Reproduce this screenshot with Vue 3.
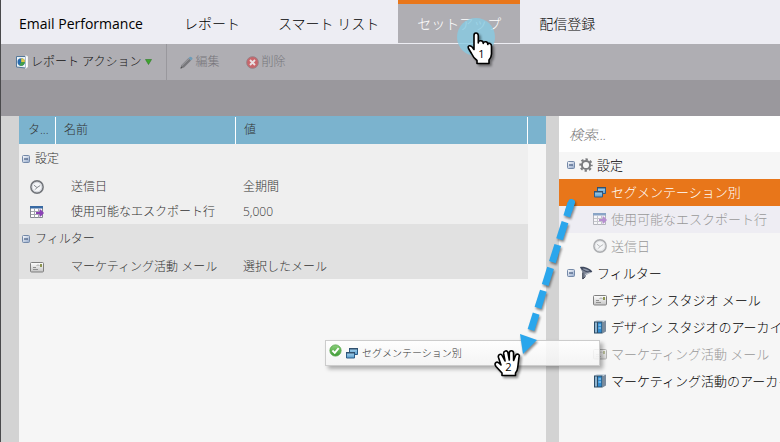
<script setup>
import { ref } from 'vue'

const tabs = ['レポート', 'スマート リスト', 'セットアップ', '配信登録']
const activeTab = ref('セットアップ')
const query = ref('')

const groups = [
  {
    title: '設定',
    shade: 'light',
    rows: [
      { icon: 'clock', name: '送信日', value: '全期間' },
      { icon: 'export', name: '使用可能なエスクポート行', value: '5,000' },
    ],
  },
  {
    title: 'フィルター',
    shade: 'dark',
    rows: [{ icon: 'mail', name: 'マーケティング活動 メール', value: '選択したメール' }],
  },
]

const tree = [
  {
    title: '設定',
    icon: 'gear',
    items: [
      { icon: 'segment', label: 'セグメンテーション別', state: 'selected' },
      { icon: 'export', label: '使用可能なエスクポート行', state: 'used striped' },
      { icon: 'clock', label: '送信日', state: 'used' },
    ],
  },
  {
    title: 'フィルター',
    icon: 'funnel',
    items: [
      { icon: 'mail', label: 'デザイン スタジオ メール', state: '' },
      { icon: 'archive', label: 'デザイン スタジオのアーカイブ', state: '' },
      { icon: 'mail', label: 'マーケティング活動 メール', state: 'used' },
      { icon: 'archive', label: 'マーケティング活動のアーカイブ', state: '' },
    ],
  },
]
</script>

<template>
  <div class="app">
    <svg class="sprite" aria-hidden="true">
      <defs>
        <linearGradient id="g-box" x1="0" y1="0" x2="1" y2="1">
          <stop offset="0" stop-color="#ffffff" /><stop offset="1" stop-color="#8fa5c8" />
        </linearGradient>
        <linearGradient id="g-mail" x1="0" y1="0" x2="0" y2="1">
          <stop offset="0" stop-color="#ffffff" /><stop offset="1" stop-color="#c4c4c4" />
        </linearGradient>
        <linearGradient id="g-blue" x1="0" y1="0" x2="0" y2="1">
          <stop offset="0" stop-color="#a9d6f0" /><stop offset="1" stop-color="#5a9ccb" />
        </linearGradient>
        <linearGradient id="g-green" x1="0" y1="0" x2="0" y2="1">
          <stop offset="0" stop-color="#8bd07a" /><stop offset="1" stop-color="#3d9a35" />
        </linearGradient>
        <symbol id="i-minus" viewBox="0 0 8 8">
          <rect x=".5" y=".5" width="7" height="7" rx="1" fill="url(#g-box)" stroke="#7489a8" />
          <path d="M2 4h4" stroke="#27406b" />
        </symbol>
        <symbol id="i-clock" viewBox="0 0 14 14">
          <circle cx="7" cy="7" r="6.100" fill="#f4f5f7" stroke="#73767b" stroke-width="1.600" />
          <circle cx="7" cy="7" r="4.800" fill="none" stroke="#c9cdd3" stroke-width=".8" />
          <path d="M4 5.200 7 7.600 10.200 5.500M7 7.600 5.200 9.600" fill="none" stroke="#7b7f85" stroke-width=".9" />
        </symbol>
        <symbol id="i-export" viewBox="0 0 14 14">
          <path d="M.5 1.500h12v11H.5z" fill="#fff" stroke="#858990" />
          <path d="M0 1h13v2.500H0z" fill="#3769a3" />
          <path d="M4.500 3.500v9M8.500 3.500v9M1 6.500h11M1 9.500h11" stroke="#a3a7ad" />
          <path d="M6 7h3.500V4.500h1.200L14 8l-3.300 3.500H9.500V9H6z" fill="#8b43b5" />
        </symbol>
        <symbol id="i-mail" viewBox="0 0 14 14">
          <rect x=".5" y="2.500" width="13" height="9.500" rx="1" fill="url(#g-mail)" stroke="#808080" />
          <path d="M3 7.500h3M3 9.500h5" stroke="#8f8f8f" />
          <rect x="10" y="4" width="2" height="3" fill="#8c9450" />
          <path d="M6.500 5.500q1.500-1 3 0" fill="none" stroke="#999" stroke-width=".8" />
        </symbol>
        <symbol id="i-gear" viewBox="0 0 14 14">
          <circle cx="7" cy="7" r="5.700" fill="none" stroke="#7a7b7e" stroke-width="2" stroke-dasharray="2.400 2.077" stroke-dashoffset="1.200" />
          <circle cx="7" cy="7" r="4.100" fill="none" stroke="#7a7b7e" stroke-width="2" />
        </symbol>
        <symbol id="i-segment" viewBox="0 0 14 14">
          <path d="M4.500 2.500h8v6h-8z" fill="url(#g-blue)" stroke="#2c5c88" />
          <path d="M4 2h9v1.500H4z" fill="#31516f" />
          <path d="M1.500 6.500h8v5.500h-8z" fill="url(#g-blue)" stroke="#2c5c88" />
          <path d="M1 6h9v1.500H1z" fill="#31516f" />
        </symbol>
        <symbol id="i-funnel" viewBox="0 0 14 14">
          <path d="M1 1 3.500 6.500V13.500L6.500 11 7 9 13 6z" fill="#7d8595" />
          <path d="M1 1C5-.3 12.500 3 13.300 5.800 9 7.500 3 5 1 1z" fill="#3f495e" />
          <path d="M3.500 2.500C6 2 10 4 11 5.300 8 5.500 4.500 4.500 3.500 2.500z" fill="#8d96a8" />
          <path d="M3.800 6.500V13L6 10.800" fill="none" stroke="#343b4b" />
          <path d="M6 8.500 11.500 6.500" stroke="#d4d8e0" stroke-width=".8" />
        </symbol>
        <symbol id="i-archive" viewBox="0 0 14 14">
          <path d="M9.500 2 13 .5v11L9.500 13.500z" fill="#7a8b9d" />
          <path d="M1 1.500 4 .3h9L9.500 2z" fill="#c3d0dc" />
          <path d="M1 1.500h8.500v12H1z" fill="#2c4c66" />
          <path d="M2 2.500h2v10H2z" fill="#8fb4d0" />
          <path d="M5 2.500h3.500v10H5z" fill="#2f8bd0" />
          <path d="M5.500 5H8M5.500 8H8" stroke="#b7e0fa" />
        </symbol>
        <symbol id="i-report" viewBox="0 0 12 14">
          <path d="M.5 1.500V12l9 1V1.500z" fill="#edf3f7" stroke="#54789a" />
          <path d="M9.500.7l2 .8v10.500l-2 1.500" fill="#fff" stroke="#f3f3f3" />
          <circle cx="5.200" cy="7" r="3.700" fill="#286bb0" />
          <path d="M5.200 7V3.300A3.700 3.700 0 0 1 8.900 7z" fill="#dfc842" />
          <path d="M5.200 7h3.700a3.700 3.700 0 0 1-5.500 3.200z" fill="#44a047" />
        </symbol>
        <symbol id="i-pencil" viewBox="0 0 13 13">
          <path d="M.5 12.500 1.500 9 8.500 2 11 4.500 4 11.500z" fill="#77777b" />
          <path d="M2 9.500 9 2.700" stroke="#a4a4a8" />
          <path d="M8.500 2 10 .7Q12.800 1 12.500 3L11 4.500z" fill="#6d9cb8" />
          <path d="M.5 12.500 1 10.700 2.300 12z" fill="#444" />
        </symbol>
        <symbol id="i-delete" viewBox="0 0 14 14">
          <circle cx="7" cy="7" r="6.300" fill="#c8666b" stroke="#958186" />
          <path d="M4.300 4.300l5.400 5.400M9.700 4.300 4.300 9.700" stroke="#e9dfe1" stroke-width="2" />
        </symbol>
        <symbol id="i-check" viewBox="0 0 14 14">
          <circle cx="7" cy="7" r="6" fill="url(#g-green)" stroke="#55a64b" />
          <path d="M3.700 7 6.200 9.500 10.400 4.500" fill="none" stroke="#fff" stroke-width="2" />
        </symbol>
      </defs>
    </svg>

    <header class="tabs">
      <h1 class="title">Email Performance</h1>
      <nav class="tab-list">
        <button
          v-for="tab in tabs"
          :key="tab"
          type="button"
          class="tab"
          :class="{ active: tab === activeTab }"
          @click="activeTab = tab"
        >{{ tab }}</button>
      </nav>
    </header>

    <div class="toolbar">
      <button type="button" class="tool menu">
        <svg class="ic-report"><use href="#i-report" /></svg>
        <span>レポート アクション</span>
        <svg class="caret" viewBox="0 0 7 6"><path d="M.5.5h6L3.500 5.500z" fill="#3fa52f" stroke="#2b7b25" stroke-width=".6" /></svg>
      </button>
      <button type="button" class="tool edit" disabled>
        <svg class="ic13"><use href="#i-pencil" /></svg><span>編集</span>
      </button>
      <button type="button" class="tool" disabled>
        <svg class="ic13"><use href="#i-delete" /></svg><span>削除</span>
      </button>
    </div>
    <div class="band"></div>

    <main class="body">
      <section class="canvas">
        <table class="grid">
          <colgroup>
            <col class="c-type" /><col class="c-name" /><col /><col class="c-end" />
          </colgroup>
          <thead>
            <tr><th>タ...</th><th>名前</th><th>値</th><th class="end"></th></tr>
          </thead>
          <tbody v-for="g in groups" :key="g.title" :class="g.shade">
            <tr class="group">
              <th colspan="3" scope="rowgroup">
                <span class="group-label"><svg class="ic8"><use href="#i-minus" /></svg>{{ g.title }}</span>
              </th>
              <td class="end"></td>
            </tr>
            <tr v-for="r in g.rows" :key="r.name" class="item">
              <td class="type"><svg class="ic14"><use :href="'#i-' + r.icon" /></svg></td>
              <td class="name">{{ r.name }}</td>
              <td class="value">{{ r.value }}</td>
              <td class="end"></td>
            </tr>
          </tbody>
        </table>
      </section>

      <aside class="palette">
        <input v-model="query" class="search" type="search" placeholder="検索..." aria-label="検索" />
        <ul class="tree">
          <li v-for="g in tree" :key="g.title">
            <div class="node branch">
              <svg class="ic8"><use href="#i-minus" /></svg>
              <svg class="ic14"><use :href="'#i-' + g.icon" /></svg>
              <span class="text">{{ g.title }}</span>
            </div>
            <ul class="tree">
              <li v-for="i in g.items" :key="i.label" class="node leaf" :class="i.state">
                <svg class="ic14"><use :href="'#i-' + i.icon" /></svg>
                <span class="text">{{ i.label }}</span>
              </li>
            </ul>
          </li>
        </ul>
      </aside>
    </main>

    <div class="drag">
      <svg class="ic13 ok"><use href="#i-check" /></svg>
      <svg class="ic14"><use href="#i-segment" /></svg>
      <span>セグメンテーション別</span>
    </div>

    <svg class="arrow" viewBox="0 0 70 170" aria-hidden="true">
      <path d="M56.500 11.500 54 19" stroke="#2aa6ec" stroke-width="7" stroke-linecap="round" />
      <path d="M56 12 16 139" stroke="#2aa6ec" stroke-width="7" stroke-dasharray="18 6" stroke-dashoffset="4" />
      <path d="M5 143 22 149 8 163z" fill="#2aa6ec" />
    </svg>

    <svg class="pointer" viewBox="0 0 44 52" aria-hidden="true">
      <circle cx="20" cy="20" r="19" fill="#87cbe2" fill-opacity=".8" />
      <path class="hand" d="M18 32V18.500Q18 16 20 16T22.300 18.500V26Q22.300 23.500 24.800 23.700T27.300 26.500Q27.500 24.500 29.700 24.800T31.800 27.500Q32.300 25.700 34 26.500T35.500 29.500V37Q35.500 40 33 43V46.500H21V43.500Q17.500 41 15.500 36.500L12.500 31.500Q11.500 29 13.500 28.800T18 32.500z" />
      <text x="25.500" y="41">1</text>
    </svg>

    <svg class="grab" viewBox="0 0 32 34" aria-hidden="true">
      <path class="hand" d="M8 17 5.500 9.500Q4.800 7 6.700 6.400T9.500 8.200L12 13 10.700 6Q10.300 3.500 12.500 3T15 5.200L16.300 12V5Q16.300 2.700 18.400 2.700T20.500 5L20.600 12.500 22.500 7.500Q23.500 5.500 25.200 6.300T26 9L24.800 19Q24.500 23 22.500 25V27.500H9V25L3 18.500Q1.200 16 2.800 14.600T6.500 15.500z" />
      <text x="15.500" y="22.500">2</text>
    </svg>
  </div>
</template>

<style>
body {
  margin: 0;
}
</style>

<style scoped>
.app {
  position: relative;
  box-sizing: border-box;
  display: flex;
  flex-direction: column;
  min-height: 100vh;
  overflow: hidden;
  border-left: 1px solid #4a4a4c;
  background: #f6f6f6;
  color: #333;
  font-family: "Open Sans", "Noto Sans CJK JP", sans-serif;
  font-size: 12px;
  font-weight: 300;
  line-height: 18px;
}
.sprite {
  position: absolute;
  width: 0;
  height: 0;
}
button {
  border: 0;
  padding: 0;
  background: none;
  color: inherit;
  font: inherit;
}
svg {
  display: block;
  flex: none;
}
.ic8 { width: 8px; height: 8px; }
.ic13 { width: 13px; height: 13px; }
.ic14 { width: 14px; height: 14px; }
.ic-report { width: 12px; height: 14px; }

.tabs {
  display: flex;
  height: 44px;
  padding-left: 18px;
  background: #ededf3;
  color: #000;
}
.title {
  margin: 0 22px 0 0;
  padding-top: 4px;
  font-size: 14px;
  font-weight: 400;
  line-height: 40px;
  white-space: nowrap;
}
.tab-list {
  display: flex;
}
.tab {
  height: 43px;
  padding: 0 19px;
  border-top: 4px solid transparent;
  font-size: 14px;
  white-space: nowrap;
}
.tab.active {
  border-color: #e8761a;
  background: #afaeb3;
  color: #fff;
}

.toolbar {
  display: flex;
  height: 36px;
  background: #afaeb3;
}
.tool {
  display: flex;
  align-items: center;
  gap: 3px;
  margin-left: 26px;
  white-space: nowrap;
}
.tool:disabled {
  color: #77767b;
}
.tool.menu {
  margin-left: 0;
  padding: 0 14px 0 15px;
  border-right: 1px solid #99989d;
  color: #111;
}
.tool.edit {
  margin-left: 13px;
}
.caret {
  width: 7px;
  height: 6px;
}
.band {
  height: 36px;
  background: #9a989d;
}

.body {
  display: grid;
  flex: 1;
  grid-template-columns: minmax(0, 1fr) 221px;
  column-gap: 13px;
  padding-left: 18px;
  background: #d3d3d3;
}
.canvas,
.palette {
  min-width: 0;
  background: #f6f6f6;
}
.grid {
  width: 100%;
  border-collapse: collapse;
  table-layout: fixed;
}
.c-type { width: 37px; }
.c-name { width: 180px; }
.c-end { width: 18px; }
.grid th,
.grid td {
  padding: 0;
  font-weight: 300;
  text-align: left;
  white-space: nowrap;
}
thead th {
  height: 28px;
  background: linear-gradient(#fff, #fff) right bottom / 1px 27px no-repeat #7bb3ce;
}
.grid thead th {
  padding-left: 8px;
}
.grid thead th:first-child {
  padding-left: 9px;
}
.grid thead .end {
  padding: 0;
  background: #7bb3ce;
}
.group { height: 30px; }
.item { height: 25px; }
.light { background: #efefef; }
.dark { background: #e1e1e1; }
tbody .end { background: #f6f6f6; }
.group-label {
  display: flex;
  align-items: center;
  gap: 5px;
  padding-left: 3px;
}
.grid .type { padding-left: 11px; }
.grid .name { padding-left: 15px; }
.grid .value { padding-left: 7px; }

.search {
  display: block;
  box-sizing: border-box;
  width: 100%;
  height: 36px;
  padding: 0 10px;
  border: 0;
  border-radius: 0;
  outline: 0;
  background: #fff;
  font: italic 300 14px "Open Sans", "Noto Sans CJK JP", sans-serif;
}
.search::placeholder {
  color: #777;
  opacity: 1;
}
.tree {
  margin: 0;
  padding: 0;
  list-style: none;
}
.node {
  display: flex;
  box-sizing: border-box;
  align-items: center;
  gap: 4px;
  height: 27px;
  padding-bottom: 2px;
  overflow: hidden;
  color: #000;
  font-size: 13px;
  white-space: nowrap;
}
.branch {
  padding-left: 8px;
}
.leaf {
  padding-left: 34px;
}
.selected {
  background: #e8761a;
  color: #fff;
}
.striped {
  background: #eeedf3;
}
.used {
  color: #999;
}
.used svg {
  opacity: .55;
}

.drag {
  position: absolute;
  top: 340px;
  left: 324px;
  display: flex;
  box-sizing: border-box;
  align-items: center;
  gap: 3px;
  width: 275px;
  height: 26px;
  padding-left: 3px;
  border: 1px solid #ccc;
  background: linear-gradient(rgba(255, 255, 255, .85), rgba(244, 244, 244, .85));
  box-shadow: 3px 3px 4px rgba(0, 0, 0, .3);
  font-size: 10px;
}
.drag .ok {
  align-self: flex-start;
  margin-top: 3px;
}
.arrow {
  position: absolute;
  top: 191px;
  left: 514px;
  width: 70px;
  height: 170px;
  filter: drop-shadow(1px 2px 1px rgba(0, 0, 0, .45));
}
.pointer {
  position: absolute;
  top: 17px;
  left: 455px;
  width: 44px;
  height: 52px;
}
.grab {
  position: absolute;
  top: 348px;
  left: 492px;
  width: 32px;
  height: 34px;
}
.hand {
  fill: #fff;
  stroke: #000;
  stroke-width: 1.6px;
  stroke-linejoin: round;
  filter: drop-shadow(2px 2px 1px rgba(0, 0, 0, .4));
}
.pointer text,
.grab text {
  font: 11px "Open Sans", sans-serif;
  text-anchor: middle;
  fill: #000;
}
</style>
